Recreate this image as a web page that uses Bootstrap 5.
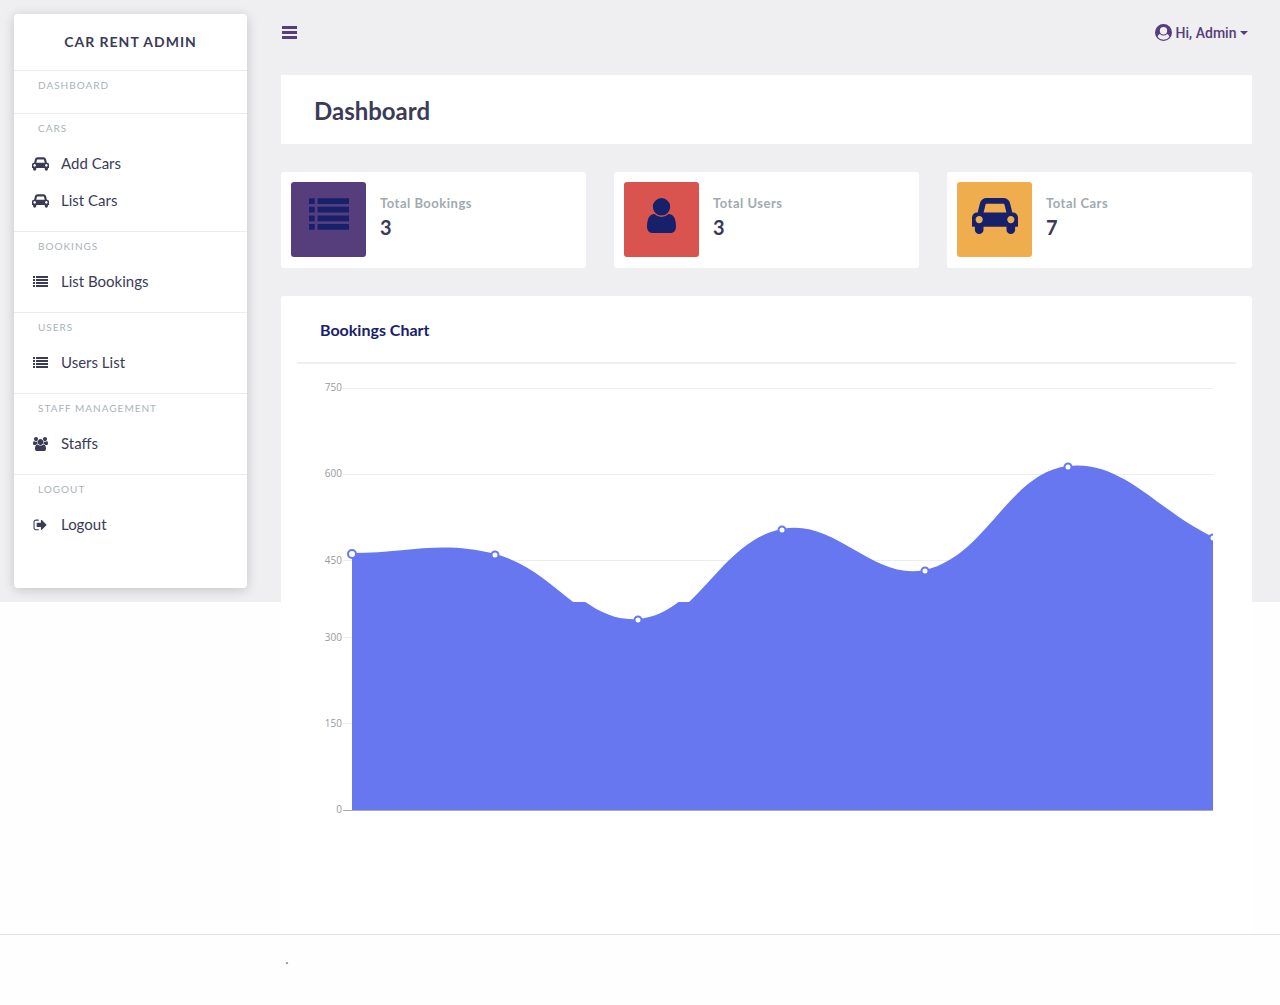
<!DOCTYPE html>
<html lang="en">
<head>
<meta charset="utf-8">
<meta name="viewport" content="width=device-width, initial-scale=1">
<title>Car Rent Admin</title>
<link href="https://cdn.jsdelivr.net/npm/bootstrap@5.3.0/dist/css/bootstrap.min.css" rel="stylesheet">
<style>
:root{--ink:#3b3b58;--purple:#563d7c;--navy:#17216b;--mist:#efeff1;--line:#ececf0}
body{font-family:Lato,"Open Sans",sans-serif;color:var(--ink);background:#fefefe}
.shell{background:linear-gradient(var(--mist) 602px,transparent 0)}
.side{width:233px;min-height:574px;margin:14px 0 0 14px;background:#fff;border-radius:4px;box-shadow:0 2px 12px rgba(0,0,0,.18)}
.brand{height:56px;padding-bottom:2px;font-size:14px;font-weight:700;letter-spacing:1px;color:var(--ink)}
.group{border-top:1px solid var(--line);padding-bottom:12px}
.group-name{height:30px;line-height:28px;padding-left:24px;margin:0;font-size:10px;font-weight:400;letter-spacing:1px;color:#a9b3b8;text-transform:uppercase}
.side-link{height:37px;padding:0 0 0 18px;font-size:15px;color:var(--ink);gap:12px}
.group-name + .side-link{margin-top:1px}
.side-link svg{width:17px;height:14px;fill:var(--ink)}
.main{min-width:0;padding:0 28px 0 34px}
.topbar{height:75px;padding-bottom:10px}
.tool{color:var(--purple);font-family:Roboto,sans-serif;font-size:14px;font-weight:500;line-height:20px}
.tool svg{fill:currentColor}
.panel{background:#fff}
.title-panel{height:69px;padding:4px 0 0 33px}
.title-panel h1{font-size:24px;font-weight:700}
.stat{padding:10px 10px 11px;gap:14px;border-radius:3px}
.stat-text{padding-top:11px}
.tile{width:75px;height:75px;border-radius:3px;padding-top:16px}
.tile svg{fill:var(--navy)}
.bg-bookings{background:#563d7c}.bg-users{background:#d9534f}.bg-cars{background:#f0ad4e}
.stat-name{font-size:13px;line-height:20px;font-weight:700;color:#a1aab0;letter-spacing:.5px}
.stat-value{font-size:20px;line-height:28px;font-weight:700;color:var(--ink)}
.chart-panel{padding:0 16px;border-radius:3px}
.chart-panel h2{height:68px;line-height:68px;margin:0;padding-left:23px;font-size:16px;font-weight:700;color:var(--navy);border-bottom:2px solid #f0f0f2}
.plot text{font-family:"Open Sans",sans-serif;font-size:10px;fill:#999;text-anchor:end}
.foot{border-top:1px solid #e0e0e2;height:71px;padding:11px 0 0 285px;font-size:16px;color:#888}
</style>
<script src="https://cdn.jsdelivr.net/npm/bootstrap@5.3.0/dist/js/bootstrap.bundle.min.js"></script>
</head>
<body>
<svg class="d-none" aria-hidden="true">
<symbol id="i-car" viewBox="0 0 2048 1600"><path d="M480 960q0-66-47-113t-113-47-113 47-47 113 47 113 113 47 113-47 47-113zm36-320h1016l-89-357q-2-8-14-17.500t-21-9.500h-768q-9 0-21 9.500t-14 17.500zm1372 320q0-66-47-113t-113-47-113 47-47 113 47 113 113 47 113-47 47-113zm160-96v384q0 14-9 23t-23 9h-96v128q0 80-56 136t-136 56-136-56-56-136v-128h-1024v128q0 80-56 136t-136 56-136-56-56-136v-128h-96q-14 0-23-9t-9-23v-384q0-93 65.500-158.500t158.500-65.500h28l105-419q23-94 104-157.500t179-63.500h768q98 0 179 63.500t104 157.500l105 419h28q93 0 158.500 65.500t65.500 158.500z"/></symbol>
<symbol id="i-list" viewBox="0 0 1792 1408"><path d="M0 0h256v256H0zM384 0h1408v256H384zM0 384h256v256H0zM384 384h1408v256H384zM0 768h256v256H0zM384 768h1408v256H384zM0 1152h256v256H0zM384 1152h1408v256H384z"/></symbol>
<symbol id="i-list-sm" viewBox="-1 -1 17 14"><path d="M0 0h2v2H0zM3 0h12v2H3zM0 3h2v2H0zM3 3h12v2H3zM0 6h2v2H0zM3 6h12v2H3zM0 9h2v2H0zM3 9h12v2H3z"/></symbol>
<symbol id="i-user" viewBox="0 0 1280 1536"><path d="M1280 1271q0 109-62.500 187t-150.500 78h-854q-88 0-150.500-78t-62.500-187q0-85 8.500-160.500t31.500-152 58.500-131 94-89 134.500-34.500q131 128 313 128t313-128q76 0 134.500 34.500t94 89 58.500 131 31.500 152 8.500 160.500zm-256-887q0 159-112.500 271.500t-271.500 112.500-271.500-112.500-112.500-271.500 112.500-271.500 271.500-112.500 271.500 112.500 112.500 271.500z"/></symbol>
<symbol id="i-users" viewBox="0 0 1920 1792"><path d="M593 896q-162 5-265 128h-134q-82 0-138-40.500t-56-118.500q0-353 124-353 6 0 43.500 21t97.500 42.500 119 21.500q67 0 133-23-5 37-5 66 0 139 81 256zm1071 637q0 120-73 189.500t-194 69.500h-874q-121 0-194-69.500t-73-189.500q0-53 3.500-103.500t14-109 26.500-108.500 43-97.500 62-81 85.500-53.500 111.500-20q10 0 43 21.500t73 48 107 48 135 21.500 135-21.500 107-48 73-48 43-21.500q61 0 111.500 20t85.500 53.500 62 81 43 97.500 26.500 108.500 14 109 3.500 103.500zm-1024-1277q0 106-75 181t-181 75-181-75-75-181 75-181 181-75 181 75 75 181zm704 384q0 159-112.500 271.500t-271.500 112.500-271.500-112.500-112.500-271.500 112.500-271.500 271.500-112.500 271.500 112.500 112.500 271.500zm576 225q0 78-56 118.500t-138 40.500h-134q-103-123-265-128 81-117 81-256 0-29-5-66 66 23 133 23 59 0 119-21.500t97.500-42.500 43.500-21q124 0 124 353zm-128-609q0 106-75 181t-181 75-181-75-75-181 75-181 181-75 181 75 75 181z"/></symbol>
<symbol id="i-out" viewBox="-180 60 2050 1690"><path d="M640 1440q0 4 1 20t.5 26.500-3 23.500-10 19.500-20.500 6.500h-320q-119 0-203.500-84.500t-84.500-203.500v-704q0-119 84.500-203.500t203.500-84.500h320q13 0 22.500 9.500t9.500 22.500q0 4 1 20t.5 26.500-3 23.500-10 19.500-20.500 6.500h-320q-66 0-113 47t-47 113v704q0 66 47 113t113 47h312l11.500 1 11.500 3 8 5.500 7 9 2 13.500zm928-544q0 26-19 45l-544 544q-19 19-45 19t-45-19-19-45v-288h-448q-26 0-45-19t-19-45v-384q0-26 19-45t45-19h448v-288q0-26 19-45t45-19 45 19l544 544q19 19 19 45z"/></symbol>
</svg>
<div class="shell d-flex align-items-start">
<aside class="side flex-shrink-0">
<div class="brand d-flex align-items-center justify-content-center">CAR RENT ADMIN</div>
<nav aria-label="Admin">
<section class="group"><h2 class="group-name">Dashboard</h2></section>
<section class="group"><h2 class="group-name">Cars</h2>
<a class="side-link nav-link d-flex align-items-center" href="#"><svg><use href="#i-car"/></svg>Add Cars</a>
<a class="side-link nav-link d-flex align-items-center" href="#"><svg><use href="#i-car"/></svg>List Cars</a></section>
<section class="group"><h2 class="group-name">Bookings</h2>
<a class="side-link nav-link d-flex align-items-center" href="#"><svg><use href="#i-list-sm"/></svg>List Bookings</a></section>
<section class="group"><h2 class="group-name">Users</h2>
<a class="side-link nav-link d-flex align-items-center" href="#"><svg><use href="#i-list-sm"/></svg>Users List</a></section>
<section class="group"><h2 class="group-name">Staff Management</h2>
<a class="side-link nav-link d-flex align-items-center" href="#"><svg><use href="#i-users"/></svg>Staffs</a></section>
<section class="group"><h2 class="group-name">Logout</h2>
<a class="side-link nav-link d-flex align-items-center" href="#"><svg><use href="#i-out"/></svg>Logout</a></section>
</nav>
</aside>
<main class="main flex-grow-1">
<div class="topbar d-flex align-items-center justify-content-between">
<button class="tool btn border-0 p-0 d-flex" type="button" aria-label="Toggle menu"><svg width="16" height="13" viewBox="0 0 16 13"><path d="M1 0h15v3H1zM1 5h15v3H1zM1 10h15v3H1z"/></svg></button>
<button class="tool btn border-0 p-0 pe-1 dropdown-toggle d-flex align-items-center" type="button" data-bs-toggle="dropdown"><svg class="me-1" width="17" height="17" viewBox="0 0 18 18"><path fill-rule="evenodd" d="M9 0a9 9 0 1 1 0 18A9 9 0 0 1 9 0zM9 3.300a3.900 3.900 0 1 0 0 7.800a3.900 3.900 0 1 0 0-7.800zM5.200 10.600C3.700 11.300 3 12.500 2.800 13.700a7.800 7.800 0 0 0 12.400 0C15 12.500 14.300 11.300 12.800 10.600A5.200 5.200 0 0 1 5.200 10.600z"/></svg>Hi, Admin</button>
</div>
<div class="panel title-panel d-flex align-items-center"><h1 class="m-0">Dashboard</h1></div>
<div class="row my-1 py-4" style="--bs-gutter-x:28px">
<div class="col-4"><div class="panel stat d-flex"><div class="tile bg-bookings d-flex justify-content-center align-items-start"><svg width="40" height="32"><use href="#i-list"/></svg></div><div class="stat-text"><div class="stat-name">Total Bookings</div><div class="stat-value">3</div></div></div></div>
<div class="col-4"><div class="panel stat d-flex"><div class="tile bg-users d-flex justify-content-center align-items-start"><svg width="29" height="35"><use href="#i-user"/></svg></div><div class="stat-text"><div class="stat-name">Total Users</div><div class="stat-value">3</div></div></div></div>
<div class="col-4"><div class="panel stat d-flex"><div class="tile bg-cars d-flex justify-content-center align-items-start"><svg width="46" height="36"><use href="#i-car"/></svg></div><div class="stat-text"><div class="stat-name">Total Cars</div><div class="stat-value">7</div></div></div></div>
</div>
<section class="panel chart-panel">
<h2>Bookings Chart</h2>
<svg class="plot d-block w-100" viewBox="0 0 939 570" role="img" aria-label="Bookings Chart">
<defs>
<clipPath id="upper"><rect width="916" height="238"/></clipPath>
<clipPath id="lower"><rect y="238" width="916" height="209"/></clipPath>
<clipPath id="dots"><rect width="916" height="447"/></clipPath>
<path id="area" d="M55 189C112 189 144 176 198 190C259 206 286 268 341 264C401 259 423 177 485 165C538 154 576 217 628 206C690 192 711 109 771 102C826 96 858 145 916 173V456H55z"/>
</defs>
<path stroke="#ededed" d="M46 24.500H916M46 110.500H916M46 196.500H916M46 273.500H55M46 359.500H55"/>
<use href="#area" fill="#6777ef" clip-path="url(#upper)"/>
<g clip-path="url(#lower)"><use href="#area" y="-9" fill="#6777ef"/></g>
<path stroke="#6777ef" stroke-width="2" d="M55 239H276M392 239H916"/>
<path stroke="#aaa" d="M46 446.500H916"/>
<g clip-path="url(#dots)" fill="#fff" stroke="#6777ef" stroke-width="2">
<circle cx="55" cy="190" r="4"/><circle cx="198" cy="191" r="3.500"/><circle cx="341" cy="256" r="3.500"/><circle cx="485" cy="166" r="3.500"/><circle cx="628" cy="207" r="3.500"/><circle cx="771" cy="103" r="3.500"/><circle cx="916" cy="174" r="3.500"/>
</g>
<text x="45" y="27">750</text><text x="45" y="113">600</text><text x="45" y="200">450</text><text x="45" y="277">300</text><text x="45" y="363">150</text><text x="45" y="449">0</text>
</svg>
</section>
</main>
</div>
<footer class="foot">.</footer>
</body>
</html>
